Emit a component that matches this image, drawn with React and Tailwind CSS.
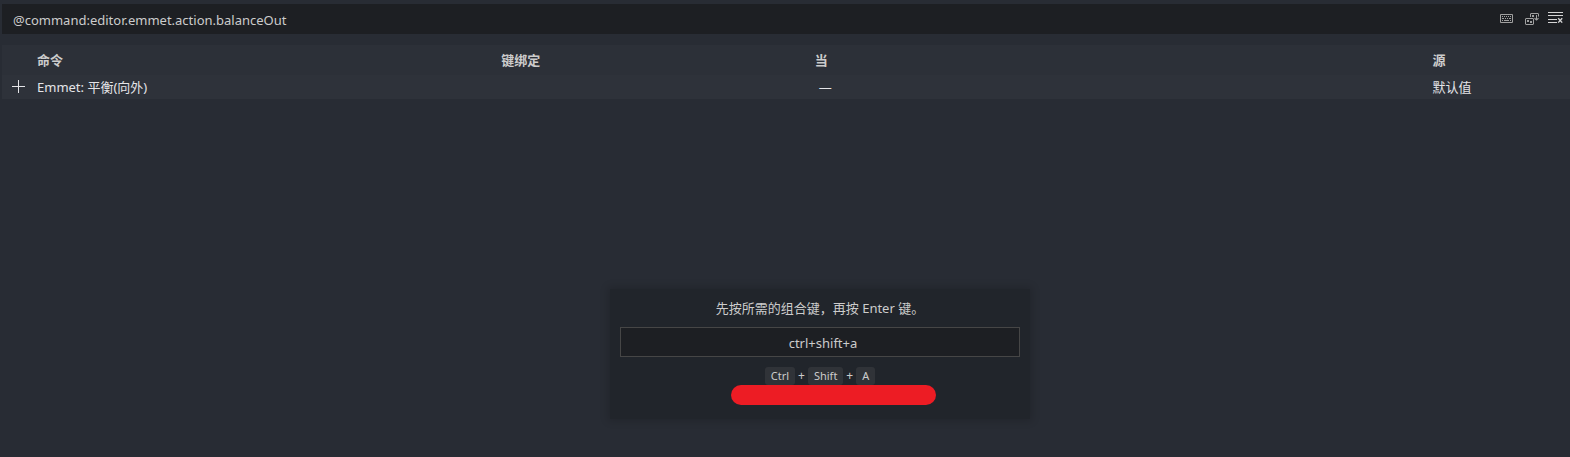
import { useState } from "react";
import { VscAdd, VscRecordKeys, VscSortPrecedence } from "react-icons/vsc";

function ClearIcon() {
  return (
    <svg viewBox="0 0 15 16" className="h-4 w-[15px]" fill="none" stroke="currentColor" aria-hidden="true">
      <path d="M0 1.5h15M0 4.5h15M0 8.5h9M0 11.5h9" />
      <path d="M10.2 7.2l4 4.4M14.2 7.2l-4 4.4" strokeWidth="1.4" />
    </svg>
  );
}

const ROWS = [
  { id: "editor.emmet.action.balanceOut", command: "Emmet: 平衡(向外)", keybinding: "", when: "—", source: "默认值" },
];

function KeyLabel({ children }) {
  return (
    <kbd className="flex h-[18px] items-center rounded-[3px] bg-[#303338] px-[6px] font-[inherit] text-[11px] leading-[18px] text-[#cccccc]">
      {children}
    </kbd>
  );
}

function DefineKeybinding() {
  const [value, setValue] = useState("ctrl+shift+a");
  const keys = ["Ctrl", "Shift", "A"];

  return (
    <div
      role="dialog"
      aria-label="定义键绑定"
      className="absolute bottom-[38px] left-[calc(50%-175px)] h-[130px] w-[420px] bg-[#21252b] p-[10px] text-center shadow-[0_0_8px_2px_rgba(0,0,0,0.16)]"
    >
      <label htmlFor="chord" className="block h-7 leading-[18px] text-[13px]">
        先按所需的组合键，再按 Enter 键。
      </label>
      <input
        id="chord"
        value={value}
        onChange={(e) => setValue(e.target.value)}
        className="block h-[30px] w-full border border-[#464646] bg-[#1d1f23] pt-[2px] pl-[6px] text-center text-[13px] text-[#cccccc] outline-none"
      />
      <div className="relative mt-[10px] flex items-center justify-center gap-[3px] text-[12px] leading-[18px]">
        {keys.map((key, index) => (
          <span key={key} className="flex items-center gap-[3px]">
            {index > 0 ? <span>+</span> : null}
            <KeyLabel>{key}</KeyLabel>
          </span>
        ))}
        <span className="absolute top-[18px] left-[111px] h-5 w-[205px] rounded-full bg-[#ed1c24]" />
      </div>
    </div>
  );
}

export default function App() {
  const [query, setQuery] = useState("@command:editor.emmet.action.balanceOut");

  return (
    <div className="relative min-h-screen bg-[#282c34] pt-1 pl-[2px] font-['Noto_Sans','Noto_Sans_CJK_SC',sans-serif] text-[13px] text-[#cccccc]">
      <div className="flex h-[30px] items-center bg-[#1d1f23] pr-[7px] pl-[11px]">
        <input
          aria-label="搜索键绑定"
          value={query}
          onChange={(e) => setQuery(e.target.value)}
          className="h-full min-w-0 flex-1 bg-transparent pt-[2px] text-[13px] outline-none"
        />
        <div className="flex items-center gap-2">
          <button type="button" aria-label="录制按键" className="text-[#a0a0a0]">
            <VscRecordKeys className="size-4" />
          </button>
          <button type="button" aria-label="按优先级排序" className="pl-[2px] text-[#a0a0a0]">
            <VscSortPrecedence className="size-4" />
          </button>
          <button type="button" aria-label="清除键绑定搜索输入" onClick={() => setQuery("")} className="text-[#d4d4d4]">
            <ClearIcon />
          </button>
        </div>
      </div>

      <table className="mt-[11px] w-full table-fixed text-left">
        <colgroup>
          <col className="w-[25px]" />
          <col className="w-[29.6%]" />
          <col className="w-[20%]" />
          <col className="w-[39.4%]" />
          <col />
        </colgroup>
        <thead>
          <tr className="h-[30px] bg-[#2c3038]">
            <th className="p-0"></th>
            <th className="pt-[2px] pr-0 pb-0 pl-[10px] font-bold">命令</th>
            <th className="pt-[2px] pr-0 pb-0 pl-[10px] font-bold">键绑定</th>
            <th className="pt-[2px] pr-0 pb-0 pl-[10px] font-bold">当</th>
            <th className="pt-[2px] pr-0 pb-0 pl-[10px] font-bold">源</th>
          </tr>
        </thead>
        <tbody>
          {ROWS.map((row) => (
            <tr key={row.id} className="h-6 bg-[#2e323a] text-[#e4e4e8]">
              <td className="p-0">
                <button type="button" aria-label="添加键绑定" className="ml-[9px] block">
                  <VscAdd className="size-4" />
                </button>
              </td>
              <td className="pt-[2px] pr-0 pb-0 pl-[10px]">{row.command}</td>
              <td className="pt-[2px] pr-0 pb-0 pl-[10px]">{row.keybinding}</td>
              <td className="pt-[2px] pr-0 pb-0 pl-[14px]">{row.when}</td>
              <td className="pt-[2px] pr-0 pb-0 pl-[10px]">{row.source}</td>
            </tr>
          ))}
        </tbody>
      </table>

      <DefineKeybinding />
    </div>
  );
}
